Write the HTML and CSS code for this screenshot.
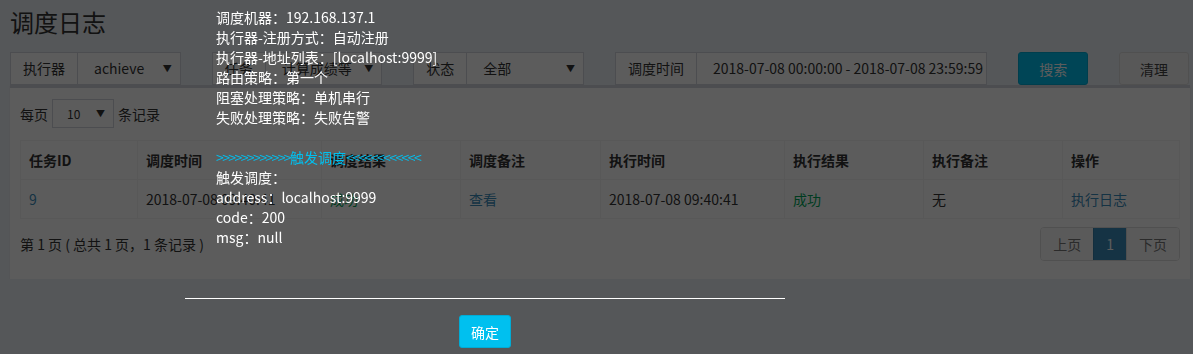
FILE: index.html
```html
<!DOCTYPE html>
<html lang="zh-CN">
<head>
  <meta charset="UTF-8">
  <title>调度日志</title>
  <link rel="stylesheet" href="styles.css">
</head>
<body>
  <div class="page">
    <h1>调度日志</h1>

    <!-- filters -->
    <div class="filters">
      <div class="group span2">
        <span class="addon">执行器</span>
        <span class="select">achieve</span>
      </div>
      <div class="group span2">
        <span class="addon">任务</span>
        <span class="select">计算成绩等</span>
      </div>
      <div class="group span2">
        <span class="addon">状态</span>
        <span class="select">全部</span>
      </div>
      <div class="group span4">
        <span class="addon">调度时间</span>
        <span class="input">2018-07-08 00:00:00 - 2018-07-08 23:59:59</span>
      </div>
      <button class="btn btn-info">搜索</button>
      <button class="btn btn-default">清理</button>
    </div>

    <!-- log table -->
    <div class="box">
      <div class="length">
        每页 <span class="select small">10</span> 条记录
      </div>
      <table class="logs">
        <thead>
          <tr>
            <th>任务ID</th>
            <th>调度时间</th>
            <th>调度结果</th>
            <th>调度备注</th>
            <th>执行时间</th>
            <th>执行结果</th>
            <th>执行备注</th>
            <th>操作</th>
          </tr>
        </thead>
        <tbody>
          <tr>
            <td><a href="#">9</a></td>
            <td>2018-07-08 09:40:41</td>
            <td class="ok">成功</td>
            <td><a href="#">查看</a></td>
            <td>2018-07-08 09:40:41</td>
            <td class="ok">成功</td>
            <td>无</td>
            <td><a href="#">执行日志</a></td>
          </tr>
        </tbody>
      </table>
      <div class="table-foot">
        <span>第 1 页 ( 总共 1 页，1 条记录 )</span>
        <div class="pagination">
          <span class="disabled">上页</span>
          <span class="active">1</span>
          <span class="disabled">下页</span>
        </div>
      </div>
    </div>
  </div>

  <!-- trigger message dialog -->
  <div class="shade"></div>
  <div class="dialog">
    <div class="dialog-body">
      调度机器：192.168.137.1<br>
      执行器-注册方式：自动注册<br>
      执行器-地址列表：[localhost:9999]<br>
      路由策略：第一个<br>
      阻塞处理策略：单机串行<br>
      失败处理策略：失败告警<br>
      <br>
      <span class="mark"><span class="arrows">&gt;&gt;&gt;&gt;&gt;&gt;&gt;&gt;&gt;&gt;&gt;&gt;</span>触发调度<span class="arrows">&lt;&lt;&lt;&lt;&lt;&lt;&lt;&lt;&lt;&lt;&lt;&lt;</span></span><br>
      触发调度：<br>
      address：localhost:9999<br>
      code：200<br>
      msg：null
    </div>
    <div class="dialog-foot">
      <button class="btn btn-ok">确定</button>
    </div>
  </div>
</body>
</html>
```

FILE: styles.css
```css
body {
  margin: 0;
  background-color: #ecf0f5;
  color: #333;
  font-family: "Noto Sans CJK SC", sans-serif;
  font-size: 14px;
  line-height: 20px;
}
a {
  color: #3c8dbc;
  text-decoration: none;
}
.page {
  padding: 0 4px 0 10px;
}
h1 {
  margin: 0;
  font-size: 24px;
  font-weight: normal;
  line-height: 44px;
}

/* filters */
.filters {
  display: grid;
  grid-template-columns: repeat(12, 1fr);
  column-gap: 31px;
  margin-top: 8px;
  height: 33px;
}
.group {
  display: flex;
  height: 33px;
}
.span2 {
  grid-column: span 2;
}
.span4 {
  grid-column: span 4;
}
.addon {
  padding: 0 12px;
  border: 1px solid #d2d6de;
  background-color: #fff;
  line-height: 31px;
  white-space: nowrap;
}
.select,
.input {
  flex: 1;
  position: relative;
  padding: 0 12px 0 16px;
  border: 1px solid #d2d6de;
  border-left: none;
  background-color: #fff;
  line-height: 31px;
  white-space: nowrap;
  overflow: hidden;
}
.select::after {
  content: "\25BC";
  position: absolute;
  right: 8px;
  top: 0;
  font-size: 9px;
}
.btn {
  border-radius: 3px;
  font-family: inherit;
  font-size: 14px;
  cursor: pointer;
}
.btn-info {
  background-color: #00c0ef;
  border: 1px solid #00acd6;
  color: #fff;
}
.btn-default {
  background-color: #f4f4f4;
  border: 1px solid #ddd;
  color: #444;
}

/* box with table */
.box {
  margin-right: -1px;
  border-top: 3px solid #d2d6de;
  background-color: #fff;
  box-shadow: 0 1px 1px rgba(0, 0, 0, 0.1);
  padding: 10px 10px 18px;
}
.length {
  display: flex;
  align-items: center;
  gap: 4px;
  height: 31px;
}
.select.small {
  flex: none;
  width: 62px;
  height: 29px;
  box-sizing: border-box;
  border: 1px solid #d2d6de;
  padding-left: 14px;
  font-size: 12px;
  line-height: 27px;
}
.logs {
  width: 100%;
  margin-top: 11px;
  border-collapse: collapse;
  table-layout: fixed;
}
.logs th,
.logs td {
  padding: 9px 8px;
  border: 1px solid #f4f4f4;
  text-align: left;
  white-space: nowrap;
}
.logs th {
  font-weight: bold;
}
.logs th:nth-child(1) { width: 100px; }
.logs th:nth-child(2) { width: 167px; }
.logs th:nth-child(3) { width: 122px; }
.logs th:nth-child(4) { width: 123px; }
.logs th:nth-child(5) { width: 167px; }
.logs th:nth-child(6) { width: 122px; }
.logs th:nth-child(7) { width: 122px; }
.ok {
  color: #00a65a;
}
.table-foot {
  display: flex;
  justify-content: space-between;
  align-items: center;
  margin-top: 8px;
}
.pagination {
  display: flex;
  border-radius: 4px;
  overflow: hidden;
  border: 1px solid #ddd;
}
.pagination span {
  padding: 6px 12px;
  background-color: #fafafa;
  color: #777;
  border-left: 1px solid #ddd;
}
.pagination span:first-child {
  border-left: none;
}
.pagination .active {
  background-color: #3c8dbc;
  color: #fff;
  border-color: #367fa9;
}

/* dialog */
.shade {
  position: fixed;
  inset: 0;
  background-color: rgba(0, 0, 0, 0.64);
}
.dialog {
  position: absolute;
  top: 0;
  left: 185px;
  width: 600px;
  color: #fff;
}
.dialog-body {
  padding: 7px 0 0 31px;
  line-height: 20px;
}
.mark {
  color: #00c0ef;
}
.arrows {
  letter-spacing: -1.6px;
}
.dialog-foot {
  margin-top: 51px;
  border-top: 1px solid #fff;
  padding-top: 16px;
  text-align: center;
}
.btn-ok {
  width: 52px;
  height: 33px;
  background-color: #00c0ef;
  border: 1px solid #00acd6;
  color: #fff;
}
```
